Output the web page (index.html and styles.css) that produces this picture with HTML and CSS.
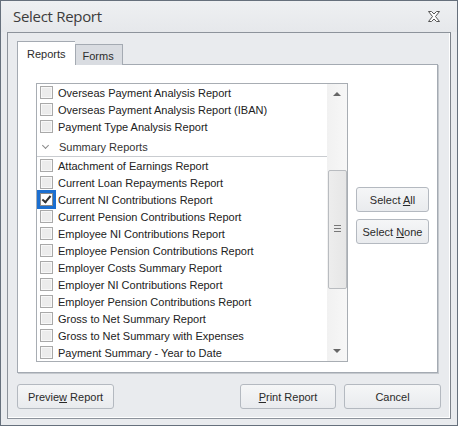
FILE: index.html
```html
<!DOCTYPE html>
<html lang="en">
<head>
    <meta charset="UTF-8">
    <title>Select Report</title>
    <link rel="stylesheet" href="styles.css">
</head>
<body>
    <div class="window">
        <div class="titlebar">
            <span class="title">Select Report</span>
            <svg class="close" width="12" height="11" viewBox="0 0 12 11">
                <polygon points="0.5,0.5 3.5,0.5 6,3 8.5,0.5 11.5,0.5 7.5,5.5 11.5,10.5 8.5,10.5 6,8 3.5,10.5 0.5,10.5 4.5,5.5" fill="#fff" stroke="#555" stroke-width="1"/>
            </svg>
        </div>
        <div class="frame">
            <div class="tabs">
                <div class="tab active">Reports</div>
                <div class="tab">Forms</div>
            </div>
            <div class="tabpage">
                <div class="listbox">
                    <div class="items" id="items"></div>
                    <div class="scrollbar">
                        <div class="arrow up"></div>
                        <div class="thumb"><span class="grip"></span></div>
                        <div class="arrow down"></div>
                    </div>
                </div>
                <div class="side-buttons">
                    <button class="button">Select <u>A</u>ll</button>
                    <button class="button">Select <u>N</u>one</button>
                </div>
            </div>
            <div class="bottom">
                <button class="button preview">Previe<u>w</u> Report</button>
                <div class="right">
                    <button class="button print"><u>P</u>rint Report</button>
                    <button class="button cancel">Cancel</button>
                </div>
            </div>
        </div>
    </div>
    <script>
        const firstReports = ["Overseas Payment Analysis Report", "Overseas Payment Analysis Report (IBAN)", "Payment Type Analysis Report"];
        const summaryReports = ["Attachment of Earnings Report", "Current Loan Repayments Report", "Current NI Contributions Report",
            "Current Pension Contributions Report", "Employee NI Contributions Report", "Employee Pension Contributions Report",
            "Employer Costs Summary Report", "Employer NI Contributions Report", "Employer Pension Contributions Report",
            "Gross to Net Summary Report", "Gross to Net Summary with Expenses", "Payment Summary - Year to Date"];
        let box = document.getElementById("items");
        function addRow(text) {
            let row = document.createElement("div");
            row.className = "row";
            let checked = text === "Current NI Contributions Report";
            row.innerHTML = `<span class="check${checked ? " checked" : ""}"></span><span>${text}</span>`;
            box.appendChild(row);
        }
        firstReports.forEach(addRow);
        let header = document.createElement("div");
        header.className = "group";
        header.innerHTML = `<span class="chevron"></span>Summary Reports`;
        box.appendChild(header);
        summaryReports.forEach(addRow);
    </script>
</body>
</html>
```

FILE: styles.css
```css
body {
    margin: 0;
    font-family: "Liberation Sans", Arial, sans-serif;
}
.window {
    width: 458px;
    height: 426px;
    box-sizing: border-box;
    border: 1px solid #66707c;
    background: #e9ebee;
    display: flex;
    flex-direction: column;
}
.titlebar {
    height: 31px;
    display: flex;
    align-items: center;
    justify-content: space-between;
    padding: 0 17px 0 12px;
    background: linear-gradient(#eef0f2, #e6e8eb);
}
.title {
    font-family: "Open Sans", "Liberation Sans", sans-serif;
    font-size: 15px;
    letter-spacing: -0.3px;
    color: #3c3c3c;
    margin-top: -2px;
}
.close {
    margin-top: -1px;
}
.frame {
    flex: 1;
    margin: 0 6px 6px 6px;
    border: 1px solid #8d939b;
    border-right-color: #7d838b;
    box-shadow: inset -1px -1px 0 #fff;
    padding: 8px 0 0 9px;
    display: flex;
    flex-direction: column;
}
.tabs {
    display: flex;
    align-items: flex-end;
    height: 24px;
    position: relative;
    z-index: 1;
    margin-bottom: -1px;
}
.tab {
    font-size: 11px;
    color: #2c2c2c;
    border: 1px solid #a4aab2;
    border-bottom: none;
    background: #d9dce1;
    height: 21px;
    box-sizing: border-box;
    padding: 5px 8px 0 7px;
}
.tab.active {
    background: #fff;
    height: 24px;
    padding: 6px 9px 0 9px;
    border-right: none;
}
.tabpage {
    width: 421px;
    height: 309px;
    box-sizing: border-box;
    background: #fff;
    border: 1px solid #a4aab2;
    box-shadow: 1px 1px 0 #c5c9ce;
    padding: 18px 0 0 18px;
    display: flex;
    gap: 8px;
}
.listbox {
    width: 312px;
    height: 279px;
    box-sizing: border-box;
    border: 1px solid #a8adb3;
    display: flex;
}
.items {
    flex: 1;
    overflow: hidden;
}
.row {
    height: 17px;
    display: flex;
    align-items: center;
    font-size: 11px;
    color: #222;
    white-space: nowrap;
}
.check {
    width: 11px;
    height: 11px;
    border: 1px solid #a9a9a9;
    background: #ececec;
    box-shadow: inset 0 0 0 1px #f8f8f8;
    margin: 0 5px 0 3px;
    flex-shrink: 0;
    position: relative;
}
.check.checked {
    background: #fff;
    outline: 3px solid #1c6fd0;
    border-color: #8a8a8a;
    box-shadow: none;
}
.check.checked::after {
    content: "";
    position: absolute;
    left: 3px;
    top: 0;
    width: 3px;
    height: 7px;
    border: solid #333;
    border-width: 0 2px 2px 0;
    transform: rotate(40deg);
}
.group {
    height: 18px;
    padding: 3px 0 0 5px;
    display: flex;
    align-items: center;
    font-size: 11px;
    color: #333;
    border-bottom: 1px solid #c9ccd0;
    margin-bottom: 0;
}
.chevron {
    width: 4px;
    height: 4px;
    border: solid #8a8a8a;
    border-width: 0 1px 1px 0;
    transform: rotate(45deg);
    margin: -3px 11px 0 1px;
}
.scrollbar {
    width: 20px;
    background: linear-gradient(90deg, #f1f1f1, #f7f7f7);
    display: flex;
    flex-direction: column;
    align-items: center;
}
.arrow {
    width: 0;
    height: 0;
    border-left: 4px solid transparent;
    border-right: 4px solid transparent;
}
.arrow.up {
    border-bottom: 4px solid #666;
    margin-top: 8px;
}
.arrow.down {
    border-top: 4px solid #666;
    margin-top: auto;
    margin-bottom: 8px;
}
.thumb {
    width: 17px;
    height: 117px;
    margin-top: 74px;
    border: 1px solid #b9bcc0;
    border-radius: 2px;
    background: linear-gradient(90deg, #ededed, #e6e6e6);
    display: flex;
    align-items: center;
    justify-content: center;
}
.grip {
    width: 7px;
    height: 5px;
    border-top: 1px solid #777;
    border-bottom: 1px solid #777;
    position: relative;
    margin-top: -3px;
}
.grip::after {
    content: "";
    position: absolute;
    left: 0;
    right: 0;
    top: 2px;
    border-top: 1px solid #777;
}
.side-buttons {
    display: flex;
    flex-direction: column;
    gap: 7px;
    margin-top: 104px;
}
.button {
    font-family: "Liberation Sans", Arial, sans-serif;
    font-size: 11px;
    color: #2a2a2a;
    background: linear-gradient(#f5f6f7, #e9ebee);
    border: 1px solid #b4b9c0;
    border-radius: 3px;
    height: 25px;
    width: 73px;
    padding: 0;
}
.bottom {
    display: flex;
    justify-content: space-between;
    margin-top: 11px;
    padding-right: 9px;
}
.bottom .right {
    display: flex;
    gap: 8px;
}
.preview {
    width: 97px;
}
.print {
    width: 96px;
}
.cancel {
    width: 97px;
}
```
